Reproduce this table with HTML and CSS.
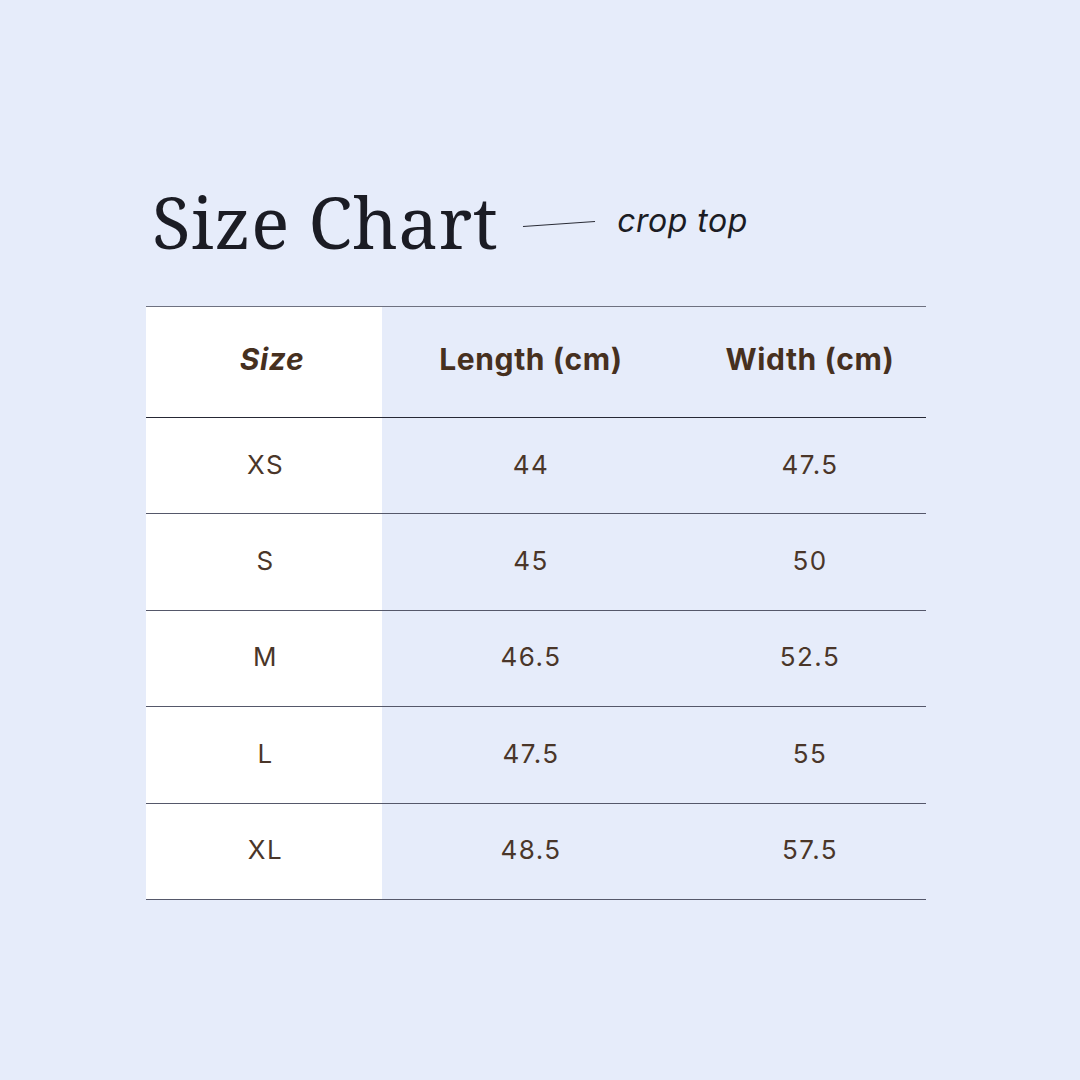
FILE: index.html
```html
<!DOCTYPE html>
<html>
<head>
<meta charset="utf-8">
<link rel="stylesheet" href="styles.css">
</head>
<body>
<main class="page">
  <header class="title-row">
    <h1 class="title">Size Chart</h1>
    <svg class="dash" width="74" height="8" viewBox="0 0 74 8"><line x1="1" y1="6.5" x2="73" y2="1.5" stroke="#2a2c36" stroke-width="1.2"/></svg>
    <span class="subtitle">crop top</span>
  </header>
  <div class="chart">
    <div class="cell head first"><em>Size</em></div>
    <div class="cell head">Length (cm)</div>
    <div class="cell head last">Width (cm)</div>

    <div class="cell first">XS</div><div class="cell">44</div><div class="cell last">47.5</div>
    <div class="cell first">S</div><div class="cell">45</div><div class="cell last">50</div>
    <div class="cell first">M</div><div class="cell">46.5</div><div class="cell last">52.5</div>
    <div class="cell first">L</div><div class="cell">47.5</div><div class="cell last">55</div>
    <div class="cell first">XL</div><div class="cell">48.5</div><div class="cell last">57.5</div>
  </div>
</main>
</body>
</html>
```
FILE: styles.css
```css
html, body {
  margin: 0;
  padding: 0;
  background: #e6ecfa;
}
.page {
  width: 1080px;
  height: 1080px;
  box-sizing: border-box;
  padding: 180px 0 0 146px;
  font-family: Inter, "Noto Sans", sans-serif;
}
.title-row {
  display: flex;
  align-items: center;
  height: 84px;
  padding-left: 6px;
}
.title {
  margin: 0;
  font-family: "Noto Serif", serif;
  font-weight: normal;
  font-size: 71px;
  letter-spacing: 0.5px;
  color: #1b1c24;
  line-height: 84px;
}
.dash {
  margin-left: 24px;
  margin-top: 4px;
}
.subtitle {
  margin-left: 21px;
  margin-top: -4px;
  font-style: italic;
  font-size: 32px;
  letter-spacing: 0.5px;
  color: #1b1c24;
}
.chart {
  margin-top: 42px;
  width: 780px;
  display: grid;
  grid-template-columns: 236px 298px 246px;
  grid-template-rows: 111px repeat(5, 96.4px);
  border-top: 1.5px solid #6e7180;
}
.cell {
  display: flex;
  align-items: center;
  justify-content: center;
  border-bottom: 1.2px solid #55586a;
  color: #4a3629;
  font-size: 26px;
  letter-spacing: 1.5px;
  padding-bottom: 3px;
}
.cell.first {
  background: #ffffff;
  padding-left: 3px;
}
.cell.last {
  padding-left: 14px;
}
.cell.head {
  font-weight: 700;
  font-size: 30px;
  letter-spacing: 0.6px;
  color: #46301f;
  border-bottom-color: #262835;
  padding-bottom: 6px;
}
.cell.head.first {
  padding-left: 16px;
}
```
